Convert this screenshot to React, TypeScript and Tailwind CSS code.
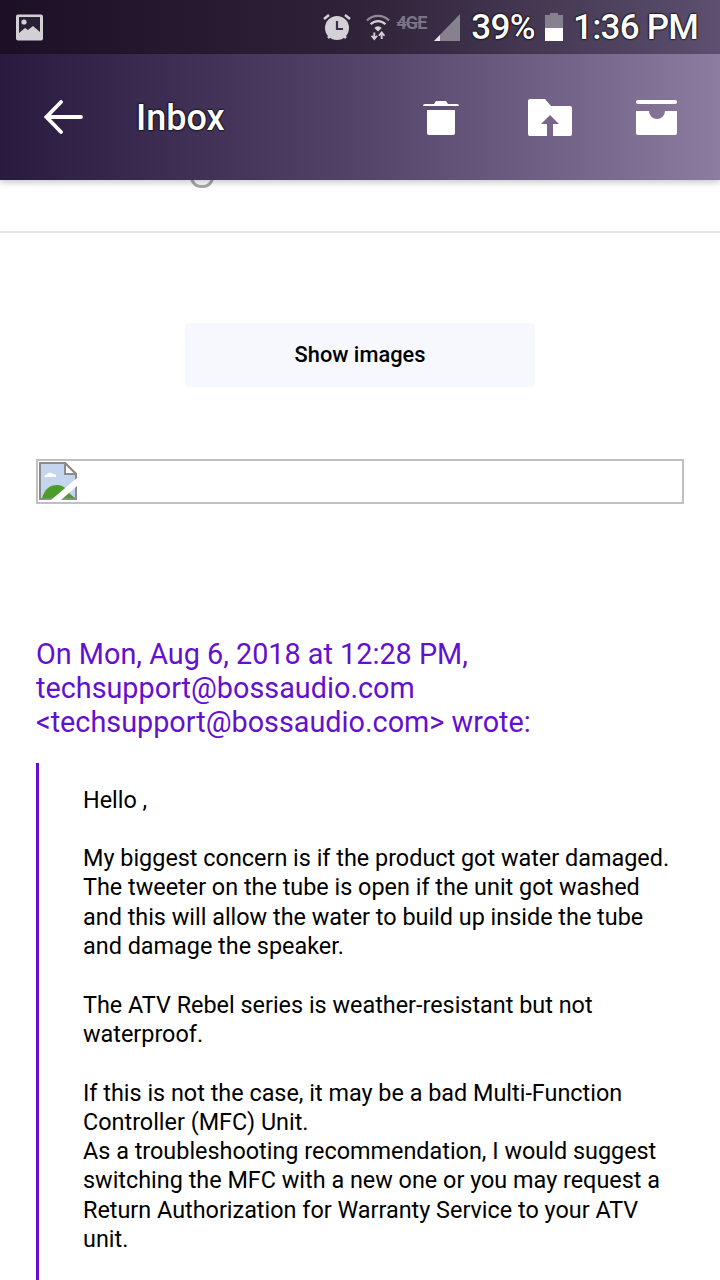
import React from "react";

const quoted = [
  ["Hello ,"],
  [
    "My biggest concern is if the product got water damaged.",
    "The tweeter on the tube is open if the unit got washed",
    "and this will allow the water to build up inside the tube",
    "and damage the speaker.",
  ],
  ["The ATV Rebel series is weather-resistant but not", "waterproof."],
  [
    "If this is not the case, it may be a bad Multi-Function",
    "Controller (MFC) Unit.",
    "As a troubleshooting recommendation, I would suggest",
    "switching the MFC with a new one or you may request a",
    "Return Authorization for Warranty Service to your ATV",
    "unit.",
  ],
];

const StatusBar = () => (
  <div className="h-[54px] bg-gradient-to-r from-[#1b1026] via-[#2f2339] to-[#5d5070] flex items-center pl-4 pr-[22px] font-['Roboto',sans-serif]">
    <svg width="28" height="27" viewBox="0 0 28 27" className="mt-[1px]">
      <rect width="27" height="26" y="0.5" rx="2" fill="#d2d0d5" />
      <rect x="3" y="3" width="21" height="20" fill="#2a2033" />
      <circle cx="8" cy="8" r="2.6" fill="#d2d0d5" />
      <path d="M3 19l6-5 3 2 5-4 7 6v5H3z" fill="#d2d0d5" />
    </svg>
    <div className="ml-auto flex items-center">
      <svg width="30" height="30" viewBox="0 0 30 30" className="mr-[14px]">
        <circle cx="15" cy="16" r="12" fill="#d3d1d6" />
        <path d="M15 9v8h6" stroke="#3a2e48" strokeWidth="2.2" fill="none" />
        <path d="M2 7l5-4M28 7l-5-4M6 26l2-2M24 26l-2-2" stroke="#d3d1d6" strokeWidth="2.6" />
      </svg>
      <svg width="24" height="30" viewBox="0 0 26 30" className="mr-[7px]">
        <path d="M1 8a17 17 0 0 1 24 0" stroke="#8f8a98" strokeWidth="2.4" fill="none" />
        <path d="M5 12a11 11 0 0 1 16 0" stroke="#d3d1d6" strokeWidth="2.4" fill="none" />
        <path d="M9 16a5.500 5.500 0 0 1 8 0l-4 4z" fill="#d3d1d6" />
        <path d="M9 21v6m-3-2.500l3 3.500 3-3.500M17 28v-6m-3 2.500l3-3.500 3 3.500" stroke="#d3d1d6" strokeWidth="2" fill="none" />
      </svg>
      <span className="mb-[9px] mr-[7px] text-[#7c7486] text-[18px] leading-none font-bold tracking-[-1px] line-through">4GE</span>
      <svg width="28" height="28" viewBox="0 0 28 28" className="mr-[10px]">
        <path d="M27 1v27H1z" fill="#87808f" />
        <path d="M7 22v6H1z" fill="#e8e6ea" />
      </svg>
      <span className="text-white text-[35px] font-medium leading-none tracking-[-0.6px] [text-shadow:0_0_2px_#000,0_0_2px_#000,0_0_1px_#000] mr-[10px]">39%</span>
      <div className="w-[18px] h-[28px] mr-[10px] flex flex-col">
        <div className="mx-auto w-2 h-[2px] bg-[#87808f]" />
        <div className="h-[13px] bg-[#87808f]" />
        <div className="h-[13px] bg-white" />
      </div>
      <span className="text-white text-[35px] font-medium leading-none tracking-[-0.8px] [text-shadow:0_0_2px_#000,0_0_2px_#000,0_0_1px_#000]">1:36 PM</span>
    </div>
  </div>
);

const Toolbar = () => (
  <div className="h-[126px] bg-gradient-to-r from-[#291a3f] via-[#554469] to-[#8b7ca0] flex items-center shadow-[0_3px_6px_rgba(0,0,0,0.2)] relative z-10 font-['Roboto',sans-serif]">
    <svg width="40" height="34" viewBox="0 0 40 34" className="ml-[44px]">
      <path d="M37 17H3M17 2L2.500 17 17 32" stroke="#fff" strokeWidth="3.800" fill="none" strokeLinecap="round" />
    </svg>
    <span className="ml-[52px] mt-[1px] text-white text-[36px] font-medium leading-none [text-shadow:0_0_2px_#000,0_0_2px_#000,0_0_1px_#000]">Inbox</span>
    <div className="ml-auto flex items-center">
      <svg width="36" height="37" viewBox="0 0 36 37" className="mr-[69px]">
        <path d="M0 7q0-2 2-2h9l2-3h10l2 3h9q2 0 2 2v0H0z" fill="#fff" />
        <path d="M4 11h28v23q0 2-2 2H6q-2 0-2-2z" fill="#fff" />
      </svg>
      <svg width="44" height="37" viewBox="0 0 44 37" className="mr-[64px]">
        <path d="M0 2q0-2 2-2h15l6 7h19q2 0 2 2v26q0 2-2 2H2q-2 0-2-2z" fill="#fff" />
        <path d="M19 37V25h-6l9-9 9 9h-6v12z" fill="#75648b" />
      </svg>
      <svg width="42" height="35" viewBox="0 0 42 35" className="mr-[42px]">
        <rect width="41" height="4" rx="2" fill="#fff" />
        <path d="M0 11h13a8 8 0 0 0 16 0h12v22q0 2-2 2H2q-2 0-2-2z" fill="#fff" />
      </svg>
    </div>
  </div>
);

const BrokenImage = () => (
  <svg width="38" height="38" viewBox="0 0 38 38" className="absolute left-[1px] top-[1px]">
    <path d="M1 1h25l11 11v25H1z" fill="#c3d6ee" stroke="#8b8b8b" strokeWidth="2" />
    <path d="M26 1v11h11z" fill="#fff" stroke="#8b8b8b" strokeWidth="2" />
    <path d="M7 13q3-4 7-1 4 0 3 3H6q-2-1 1-2z" fill="#fff" />
    <path d="M3 36q4-13 15-13 8 0 13 9l5 4z" fill="#4b9c2b" />
    <path d="M12 38L38 16v8L22 38z" fill="#fff" />
  </svg>
);

export default function App() {
  return (
    <div className="w-[720px] h-[1280px] overflow-hidden bg-white font-['Roboto',sans-serif]">
      <StatusBar />
      <Toolbar />
      <div className="h-[53px] border-b-2 border-[#e4e4e6] relative">
        <div className="absolute left-[190px] top-[-14px] w-6 h-[22px] rounded-full border-[3px] border-[#a8a8a8]" />
      </div>
      <div className="flex justify-center mt-[90px]">
        <div className="w-[350px] h-[64px] rounded bg-[#f7f7fe] flex items-center justify-center text-black text-[21.8px] font-medium">
          Show images
        </div>
      </div>
      <div className="relative mx-9 mt-[72px] h-[45px] border-2 border-[#c0c0c0]">
        <BrokenImage />
      </div>
      <div className="mx-9 mt-[133px] text-[#6410cf] text-[28.8px] leading-[34px]">
        <div>On Mon, Aug 6, 2018 at 12:28 PM,</div>
        <div>techsupport@bossaudio.com</div>
        <div>&lt;techsupport@bossaudio.com&gt; wrote:</div>
      </div>
      <div className="ml-9 mt-[24px] border-l-[3px] border-[#6410cf] pl-[44px] pt-[22.6px] pb-[40px] text-black text-[23.4px] leading-[29.3px] flex flex-col gap-[29.3px]">
        {quoted.map((para, i) => (
          <div key={i}>
            {para.map((line, j) => (
              <div key={j} className="whitespace-nowrap">{line}</div>
            ))}
          </div>
        ))}
      </div>
    </div>
  );
}
